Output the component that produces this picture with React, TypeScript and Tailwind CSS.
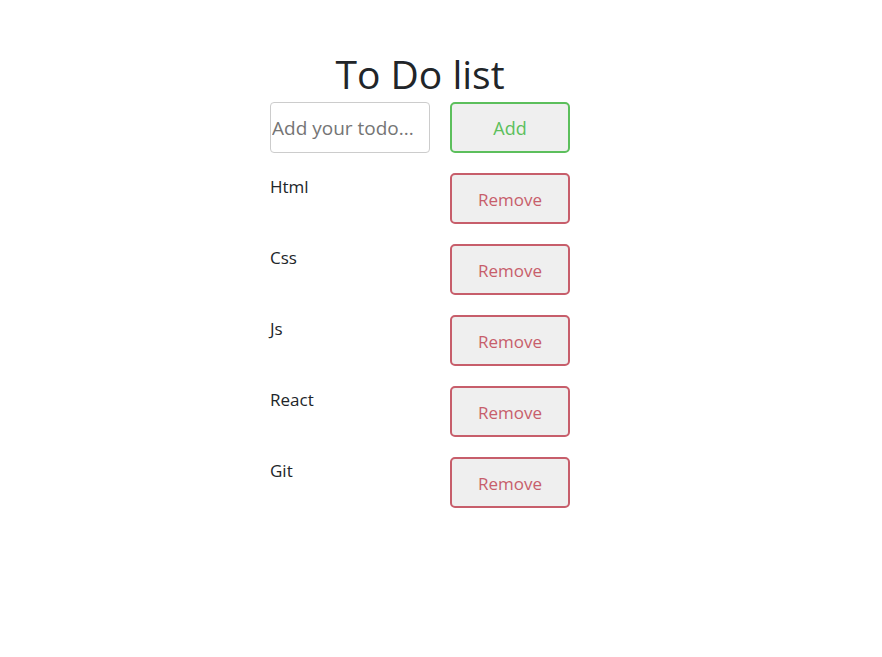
import { useState } from "react";

const initialTodos = ["Html", "Css", "Js", "React", "Git"];

export default function App() {
  const [todos, setTodos] = useState<string[]>(initialTodos);
  const [text, setText] = useState("");

  const addTodo = () => {
    if (!text.trim()) return;
    setTodos([...todos, text.trim()]);
    setText("");
  };

  return (
    <div className="flex min-h-screen justify-center bg-white pr-[42px] font-['Open_Sans',sans-serif] text-[#212529]">
      <div className="w-[300px] pt-[46px]">
        <h1 className="text-center text-[39px] leading-[56px] font-normal">To Do list</h1>

        <div className="flex gap-5">
          <input
            type="text"
            placeholder="Add your todo..."
            value={text}
            onChange={(e) => setText(e.target.value)}
            className="h-[51px] w-[160px] rounded border border-[#cccccc] px-[1px] text-[19px] placeholder-[#757575] outline-none"
          />
          <button
            onClick={addTodo}
            className="h-[51px] w-[120px] rounded-[5px] border-2 border-[#5cbf5c] bg-[#efefef] pt-[1px] text-[18px] text-[#5cbf5c]"
          >
            Add
          </button>
        </div>

        {/* list */}
        <ul className="mt-5 flex flex-col gap-5">
          {todos.map((todo, i) => (
            <li key={i} className="flex items-start gap-5">
              <span className="w-[160px] text-[17px] leading-[28px]">{todo}</span>
              <button
                onClick={() => setTodos(todos.filter((_, j) => j !== i))}
                className="h-[51px] w-[120px] rounded-[5px] border-2 border-[#c75e6b] bg-[#efefef] pt-[3px] text-[17px] text-[#c75e6b]"
              >
                Remove
              </button>
            </li>
          ))}
        </ul>
      </div>
    </div>
  );
}
